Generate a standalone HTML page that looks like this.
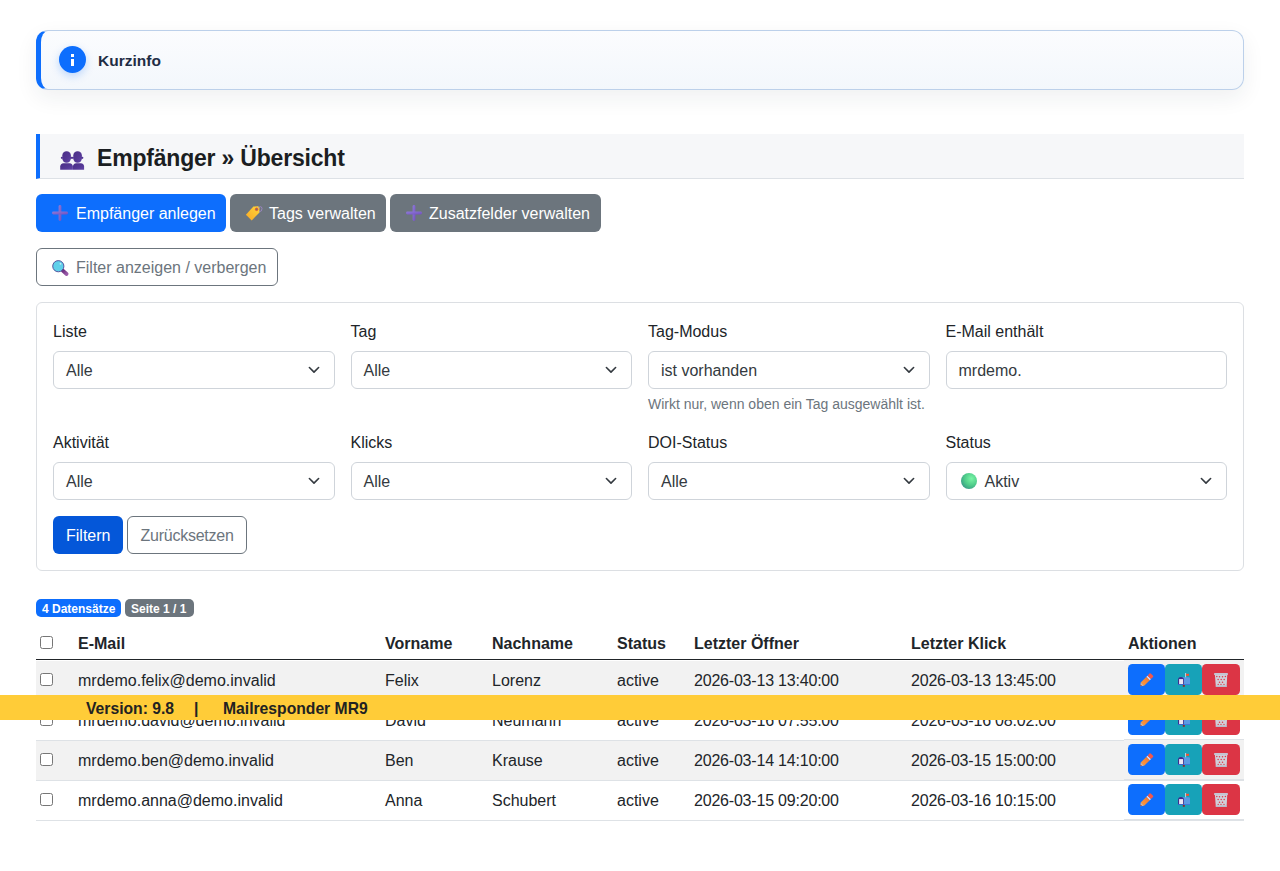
<!DOCTYPE html>
<html lang="de">
<head>
<meta charset="utf-8">
<title>Empfänger</title>
<style>
*{box-sizing:border-box;}
html,body{margin:0;padding:0;background:#fff;}
body{font-family:"Liberation Sans",sans-serif;font-size:16px;line-height:1.5;color:#212529;width:1280px;height:871px;overflow:hidden;position:relative;}
.abs{position:absolute;}
svg{display:block;}
/* info box */
.info{left:36px;top:30px;width:1208px;height:60px;border:1px solid #bcd0ea;border-left:5px solid #0d6efd;border-radius:12px;background:linear-gradient(180deg,#fbfcfe 0%,#f3f7fc 100%);box-shadow:0 8px 22px rgba(30,40,60,.07);}
.info .ic{position:absolute;left:18px;top:15px;width:27px;height:27px;border-radius:50%;background:#0d6efd;box-shadow:0 3px 8px rgba(13,110,253,.25);}
.info .ic b{position:absolute;left:11.8px;top:8px;width:3.4px;height:12px;}
.info .ic b:before{content:"";position:absolute;left:0;top:0;width:3.4px;height:3.3px;background:#fff;}
.info .ic b:after{content:"";position:absolute;left:0;top:4.7px;width:3.4px;height:7.1px;background:#fff;}
.info .t{position:absolute;left:57px;top:19.5px;font-size:15.5px;font-weight:bold;line-height:20px;color:#1f2d45;}
/* header */
.hdr{left:36px;top:134px;width:1208px;height:45px;background:#f6f7f9;border-left:4px solid #0d6efd;border-bottom:1px solid #dde1e6;}
.hdr .t{position:absolute;left:57px;top:10px;font-size:23px;letter-spacing:-0.2px;font-weight:bold;line-height:28px;color:#1b1e22;white-space:nowrap;}
.hdr .ico{position:absolute;}
/* buttons */
.btn{position:absolute;height:38px;border-radius:6px;color:#fff;font-size:16px;line-height:38px;white-space:nowrap;}
.btn .tx{position:absolute;top:1px;}
.bp{background:#0d6efd;}
.bs{background:#6c757d;}
.bo{background:#fff;border:1px solid #6c757d;color:#6c757d;line-height:36px;}

/* card */
.card{left:36px;top:302px;width:1208px;height:269px;border:1px solid #dcdfe3;border-radius:6px;}
.lbl{position:absolute;font-size:16px;line-height:24px;color:#212529;white-space:nowrap;}
.sel{position:absolute;width:281.5px;height:38px;border:1px solid #cfd4da;border-radius:6px;background:#fff;font-size:16px;line-height:36px;color:#343a40;}
.sel .v{position:absolute;left:12px;top:1px;white-space:nowrap;}
.sel svg{position:absolute;right:12px;top:12px;}
.help{position:absolute;font-size:14px;line-height:21px;color:#6c757d;white-space:nowrap;}
/* badges */
.badge{position:absolute;top:599px;height:18px;border-radius:5px;color:#fff;font-size:12px;font-weight:bold;line-height:18px;white-space:nowrap;}
/* table */
.th{position:absolute;top:632px;font-weight:bold;font-size:16px;line-height:24px;color:#212529;white-space:nowrap;}
.td{position:absolute;font-size:16px;line-height:24px;color:#212529;white-space:nowrap;}
.row{position:absolute;left:36px;width:1208px;height:40px;border-bottom:1px solid #dee2e6;}
.row.g{background:#f2f2f2;}
.cb{position:absolute;left:40px;width:13px;height:13px;border:1px solid #767676;border-radius:2.5px;background:#fff;}
.ab{position:absolute;height:31px;width:37px;border-radius:4.5px;}
.ab svg{position:absolute;left:0;top:0;}
.banner{left:0;top:695px;width:1280px;height:25px;background:#ffcc38;}
.banner span{position:absolute;top:3.5px;font-size:15.7px;font-weight:bold;line-height:20px;color:#222;white-space:nowrap;}
</style>
</head>
<body>

<div class="abs info">
  <div class="ic"><b></b></div>
  <div class="t">Kurzinfo</div>
</div>

<div class="abs hdr">
  <div class="ico" style="left:15px;top:11px">
    <svg width="35" height="30" viewBox="0 0 35 30">
      <defs><linearGradient id="pg" x1="0" y1="0" x2="1" y2="1"><stop offset="0" stop-color="#4a2e86"/><stop offset="0.6" stop-color="#553896"/><stop offset="1" stop-color="#6446a8"/></linearGradient></defs>
      <g fill="url(#pg)">
      <rect x="7.3" y="6.2" width="8.6" height="11.6" rx="4.2"/>
      <circle cx="6.9" cy="12.8" r="1.1"/><circle cx="16.3" cy="12.8" r="1.1"/>
      <path d="M5.2 24.8 L5.2 21.5 Q5.4 18.6 8.6 18.2 L14.5 18.2 Q17.7 18.6 17.9 21.5 L17.9 24.8 Z"/>
      <rect x="18.3" y="6.2" width="8.6" height="11.6" rx="4.2"/>
      <circle cx="17.9" cy="12.8" r="1.1"/><circle cx="27.3" cy="12.8" r="1.1"/>
      <path d="M17.9 24.8 L17.9 21.5 Q18.1 18.6 21.3 18.2 L25.8 18.2 Q29 18.6 29.1 21.5 L29.1 24.8 Z"/>
      </g>
    </svg>
  </div>
  <div class="t">Empfänger » Übersicht</div>
</div>

<div class="btn bp" style="left:36px;top:194px;width:190px;">
  <svg class="abs" style="left:16px;top:11px" width="16" height="16" viewBox="0 0 16 16"><defs><linearGradient id="pl1" x1="0" y1="0" x2="1" y2="1"><stop offset="0" stop-color="#8d7ad8"/><stop offset="1" stop-color="#7450c0"/></linearGradient></defs><rect x="6.6" y="0" width="2.8" height="16" rx="1.4" fill="url(#pl1)"/><rect x="0" y="6.6" width="16" height="2.8" rx="1.4" fill="url(#pl1)"/></svg>
  <span class="tx" style="left:40px">Empfänger anlegen</span>
</div>
<div class="btn bs" style="left:230px;top:194px;width:156px;">
  <svg class="abs" style="left:10px;top:4px" width="26" height="26" viewBox="0 0 26 26"><defs><linearGradient id="tg" x1="0" y1="1" x2="1" y2="0"><stop offset="0" stop-color="#f9a825"/><stop offset="1" stop-color="#ffd63a"/></linearGradient></defs><path d="M5.9 16.8 L11.7 22.4 L19.5 14.6 L19.4 9.6 L18.2 8.3 L13.4 8.6 Z" fill="url(#tg)"/><path d="M16.6 11.3 Q21.5 6.5 22 10.5 Q22.3 13.6 19 13.8" fill="none" stroke="#a48ad0" stroke-width="0.8"/><circle cx="16.6" cy="11.3" r="1.3" fill="#6c757d" stroke="#ec5a2a" stroke-width="1"/></svg>
  <span class="tx" style="left:39px">Tags verwalten</span>
</div>
<div class="btn bs" style="left:390px;top:194px;width:211px;">
  <svg class="abs" style="left:16px;top:11px" width="16" height="16" viewBox="0 0 16 16"><defs><linearGradient id="pl2" x1="0" y1="0" x2="1" y2="1"><stop offset="0" stop-color="#8d7ad8"/><stop offset="1" stop-color="#7450c0"/></linearGradient></defs><rect x="6.6" y="0" width="2.8" height="16" rx="1.4" fill="url(#pl2)"/><rect x="0" y="6.6" width="16" height="2.8" rx="1.4" fill="url(#pl2)"/></svg>
  <span class="tx" style="left:39px">Zusatzfelder verwalten</span>
</div>

<div class="btn bo" style="left:36px;top:248px;width:242px;">
  <svg class="abs" style="left:14.5px;top:10.5px" width="18" height="18" viewBox="0 0 18 18"><defs><linearGradient id="hg" x1="0" y1="0" x2="1" y2="1"><stop offset="0" stop-color="#6a2f7e"/><stop offset="1" stop-color="#9a5aa8"/></linearGradient></defs><path d="M10.8 10.6 L14.6 14" stroke="url(#hg)" stroke-width="3.8" stroke-linecap="round"/><circle cx="6.3" cy="6.2" r="5.6" fill="#5fd0ea" stroke="#4e4594" stroke-width="0.9"/><circle cx="8.5" cy="3.8" r="0.9" fill="#cfe9f5"/></svg>
  <span class="tx" style="left:39px">Filter anzeigen / verbergen</span>
</div>

<div class="abs card"></div>
<div class="lbl" style="left:53px;top:320px">Liste</div>
<div class="sel" style="left:53px;top:351px"><span class="v">Alle</span><svg width="16" height="12" viewBox="0 0 16 12"><path d="M3.4 3.5 L8 8.1 L12.6 3.5" fill="none" stroke="#343a40" stroke-width="1.6" stroke-linecap="round" stroke-linejoin="round"/></svg></div>
<div class="lbl" style="left:350.5px;top:320px">Tag</div>
<div class="sel" style="left:350.5px;top:351px"><span class="v">Alle</span><svg width="16" height="12" viewBox="0 0 16 12"><path d="M3.4 3.5 L8 8.1 L12.6 3.5" fill="none" stroke="#343a40" stroke-width="1.6" stroke-linecap="round" stroke-linejoin="round"/></svg></div>
<div class="lbl" style="left:648px;top:320px">Tag-Modus</div>
<div class="sel" style="left:648px;top:351px"><span class="v">ist vorhanden</span><svg width="16" height="12" viewBox="0 0 16 12"><path d="M3.4 3.5 L8 8.1 L12.6 3.5" fill="none" stroke="#343a40" stroke-width="1.6" stroke-linecap="round" stroke-linejoin="round"/></svg></div>
<div class="lbl" style="left:945.5px;top:320px">E-Mail enthält</div>
<div class="sel" style="left:945.5px;top:351px"><span class="v">mrdemo.</span></div>
<div class="help" style="left:648px;top:394px">Wirkt nur, wenn oben ein Tag ausgewählt ist.</div>
<div class="lbl" style="left:53px;top:431px">Aktivität</div>
<div class="sel" style="left:53px;top:462px"><span class="v">Alle</span><svg width="16" height="12" viewBox="0 0 16 12"><path d="M3.4 3.5 L8 8.1 L12.6 3.5" fill="none" stroke="#343a40" stroke-width="1.6" stroke-linecap="round" stroke-linejoin="round"/></svg></div>
<div class="lbl" style="left:350.5px;top:431px">Klicks</div>
<div class="sel" style="left:350.5px;top:462px"><span class="v">Alle</span><svg width="16" height="12" viewBox="0 0 16 12"><path d="M3.4 3.5 L8 8.1 L12.6 3.5" fill="none" stroke="#343a40" stroke-width="1.6" stroke-linecap="round" stroke-linejoin="round"/></svg></div>
<div class="lbl" style="left:648px;top:431px">DOI-Status</div>
<div class="sel" style="left:648px;top:462px"><span class="v">Alle</span><svg width="16" height="12" viewBox="0 0 16 12"><path d="M3.4 3.5 L8 8.1 L12.6 3.5" fill="none" stroke="#343a40" stroke-width="1.6" stroke-linecap="round" stroke-linejoin="round"/></svg></div>
<div class="lbl" style="left:945.5px;top:431px">Status</div>
<div class="sel" style="left:945.5px;top:462px"><svg style="position:absolute;left:14px;top:10px" width="16" height="16" viewBox="0 0 16 16"><defs><radialGradient id="gg" cx="0.65" cy="0.35" r="0.7"><stop offset="0" stop-color="#7af5a6"/><stop offset="0.6" stop-color="#4fcc8a"/><stop offset="1" stop-color="#3a9f86"/></radialGradient></defs><circle cx="8" cy="8" r="8" fill="url(#gg)"/></svg><span class="v" style="left:38px">Aktiv</span><svg width="16" height="12" viewBox="0 0 16 12"><path d="M3.4 3.5 L8 8.1 L12.6 3.5" fill="none" stroke="#343a40" stroke-width="1.6" stroke-linecap="round" stroke-linejoin="round"/></svg></div>
<div class="btn" style="left:53px;top:516px;width:70px;background:#0457d9;"><span class="tx" style="left:13px">Filtern</span></div>
<div class="btn bo" style="left:127px;top:516px;width:120px;"><span class="tx" style="left:12.5px;letter-spacing:-0.25px">Zurücksetzen</span></div>
<div class="badge" style="left:36px;width:85px;background:#0d6efd;"><span style="position:absolute;left:6px;top:0.7px">4 Datensätze</span></div>
<div class="badge" style="left:125px;width:69px;background:#6c757d;"><span style="position:absolute;left:6px;top:0.7px">Seite 1 / 1</span></div>
<div class="cb" style="top:636px"></div>
<div class="th" style="left:78px">E-Mail</div>
<div class="th" style="left:385px">Vorname</div>
<div class="th" style="left:492px">Nachname</div>
<div class="th" style="left:617px">Status</div>
<div class="th" style="left:694px">Letzter Öffner</div>
<div class="th" style="left:911px">Letzter Klick</div>
<div class="th" style="left:1128px">Aktionen</div>
<div class="abs" style="left:36px;top:659px;width:1208px;height:1px;background:#212529"></div>
<div class="row g" style="top:661px"></div>
<div class="row g" style="top:660px;left:1124px;width:120px"></div>
<div class="cb" style="top:673px"></div>
<div class="td" style="left:78px;top:669px">mrdemo.felix@demo.invalid</div>
<div class="td" style="left:385px;top:669px">Felix</div>
<div class="td" style="left:492px;top:669px">Lorenz</div>
<div class="td" style="left:617px;top:669px">active</div>
<div class="td" style="left:694px;top:669px;letter-spacing:-0.2px">2026-03-13 13:40:00</div>
<div class="td" style="left:911px;top:669px;letter-spacing:-0.2px">2026-03-13 13:45:00</div>
<div class="ab" style="left:1128px;top:664px;background:#0d6efd"><svg width="37" height="31" viewBox="0 0 37 31"><defs><linearGradient id="pb" x1="0" y1="1" x2="1" y2="0"><stop offset="0" stop-color="#ffa040"/><stop offset="1" stop-color="#ef7330"/></linearGradient></defs><path d="M12.76 18.39 L16.12 21.81 L21.83 16.21 L18.47 12.79 Z" fill="url(#pb)"/><path d="M12.3 22.2 L12.76 18.39 L16.12 21.81 Z" fill="#e9b58c"/><path d="M12.3 22.2 L12.6 20.6 L14 21.9 Z" fill="#7a3a4a"/><path d="M18.47 12.79 L21.83 16.21 L22.98 15.09 L19.62 11.67 Z" fill="#e4dff0"/><path d="M19.62 11.67 L22.98 15.09 L25.08 13.01 Q25.6 12.3 24.9 11.6 L22.7 9.5 Q22 9 21.4 9.6 Z" fill="#f4574a"/></svg></div>
<div class="ab" style="left:1165px;top:664px;background:#17a2b8"><svg width="37" height="31" viewBox="0 0 37 31"><rect x="17.8" y="20.8" width="2" height="2" fill="#8a2a2a"/><rect x="20.2" y="9" width="0.9" height="6" fill="#d8dce6"/><rect x="21" y="9.8" width="3" height="2" fill="#f4512f"/><path d="M17 13.3 H23.8 Q25 13.3 25 14.5 V20.9 H17 Z" fill="#5a9ae4"/><path d="M13 16 Q13 12.9 16 12.9 Q19 12.9 19 16 V20.9 H13 Z" fill="#3b2f8e"/><rect x="14.1" y="15.1" width="4" height="5" fill="#ece8f4"/><rect x="13" y="20.1" width="12" height="0.8" fill="#3a6fd8"/></svg></div>
<div class="ab" style="width:38px;left:1202px;top:664px;background:#dc3545"><svg width="38" height="31" viewBox="0 0 38 31"><path d="M12.9 10.6 H25.3 L24.6 22.4 H13.8 Z" fill="#cfd0da"/><g fill="#e03a48"><circle cx="14.8" cy="12.6" r="0.75"/><circle cx="17.5" cy="12.8" r="0.75"/><circle cx="20.5" cy="12.8" r="0.75"/><circle cx="23.4" cy="12.6" r="0.75"/><circle cx="16.1" cy="15.4" r="0.75"/><circle cx="19.2" cy="15.4" r="0.75"/><circle cx="22.2" cy="15.4" r="0.75"/><circle cx="17.5" cy="18.2" r="0.75"/><circle cx="20.5" cy="18.2" r="0.75"/><circle cx="16.2" cy="20.4" r="0.65"/><circle cx="19" cy="20.4" r="0.65"/><circle cx="22" cy="20.4" r="0.65"/></g><rect x="12.1" y="9" width="13.8" height="1.9" rx="0.5" fill="#c4c6d2"/><rect x="13.7" y="21.4" width="11.2" height="1.5" rx="0.4" fill="#b8bccb"/></svg></div>
<div class="row" style="top:701px"></div>
<div class="row" style="top:700px;left:1124px;width:120px"></div>
<div class="cb" style="top:713px"></div>
<div class="td" style="left:78px;top:709px">mrdemo.david@demo.invalid</div>
<div class="td" style="left:385px;top:709px">David</div>
<div class="td" style="left:492px;top:709px">Neumann</div>
<div class="td" style="left:617px;top:709px">active</div>
<div class="td" style="left:694px;top:709px;letter-spacing:-0.2px">2026-03-16 07:55:00</div>
<div class="td" style="left:911px;top:709px;letter-spacing:-0.2px">2026-03-16 08:02:00</div>
<div class="ab" style="left:1128px;top:704px;background:#0d6efd"><svg width="37" height="31" viewBox="0 0 37 31"><defs><linearGradient id="pb" x1="0" y1="1" x2="1" y2="0"><stop offset="0" stop-color="#ffa040"/><stop offset="1" stop-color="#ef7330"/></linearGradient></defs><path d="M12.76 18.39 L16.12 21.81 L21.83 16.21 L18.47 12.79 Z" fill="url(#pb)"/><path d="M12.3 22.2 L12.76 18.39 L16.12 21.81 Z" fill="#e9b58c"/><path d="M12.3 22.2 L12.6 20.6 L14 21.9 Z" fill="#7a3a4a"/><path d="M18.47 12.79 L21.83 16.21 L22.98 15.09 L19.62 11.67 Z" fill="#e4dff0"/><path d="M19.62 11.67 L22.98 15.09 L25.08 13.01 Q25.6 12.3 24.9 11.6 L22.7 9.5 Q22 9 21.4 9.6 Z" fill="#f4574a"/></svg></div>
<div class="ab" style="left:1165px;top:704px;background:#17a2b8"><svg width="37" height="31" viewBox="0 0 37 31"><rect x="17.8" y="20.8" width="2" height="2" fill="#8a2a2a"/><rect x="20.2" y="9" width="0.9" height="6" fill="#d8dce6"/><rect x="21" y="9.8" width="3" height="2" fill="#f4512f"/><path d="M17 13.3 H23.8 Q25 13.3 25 14.5 V20.9 H17 Z" fill="#5a9ae4"/><path d="M13 16 Q13 12.9 16 12.9 Q19 12.9 19 16 V20.9 H13 Z" fill="#3b2f8e"/><rect x="14.1" y="15.1" width="4" height="5" fill="#ece8f4"/><rect x="13" y="20.1" width="12" height="0.8" fill="#3a6fd8"/></svg></div>
<div class="ab" style="width:38px;left:1202px;top:704px;background:#dc3545"><svg width="38" height="31" viewBox="0 0 38 31"><path d="M12.9 10.6 H25.3 L24.6 22.4 H13.8 Z" fill="#cfd0da"/><g fill="#e03a48"><circle cx="14.8" cy="12.6" r="0.75"/><circle cx="17.5" cy="12.8" r="0.75"/><circle cx="20.5" cy="12.8" r="0.75"/><circle cx="23.4" cy="12.6" r="0.75"/><circle cx="16.1" cy="15.4" r="0.75"/><circle cx="19.2" cy="15.4" r="0.75"/><circle cx="22.2" cy="15.4" r="0.75"/><circle cx="17.5" cy="18.2" r="0.75"/><circle cx="20.5" cy="18.2" r="0.75"/><circle cx="16.2" cy="20.4" r="0.65"/><circle cx="19" cy="20.4" r="0.65"/><circle cx="22" cy="20.4" r="0.65"/></g><rect x="12.1" y="9" width="13.8" height="1.9" rx="0.5" fill="#c4c6d2"/><rect x="13.7" y="21.4" width="11.2" height="1.5" rx="0.4" fill="#b8bccb"/></svg></div>
<div class="row g" style="top:741px"></div>
<div class="row g" style="top:740px;left:1124px;width:120px"></div>
<div class="cb" style="top:753px"></div>
<div class="td" style="left:78px;top:749px">mrdemo.ben@demo.invalid</div>
<div class="td" style="left:385px;top:749px">Ben</div>
<div class="td" style="left:492px;top:749px">Krause</div>
<div class="td" style="left:617px;top:749px">active</div>
<div class="td" style="left:694px;top:749px;letter-spacing:-0.2px">2026-03-14 14:10:00</div>
<div class="td" style="left:911px;top:749px;letter-spacing:-0.2px">2026-03-15 15:00:00</div>
<div class="ab" style="left:1128px;top:744px;background:#0d6efd"><svg width="37" height="31" viewBox="0 0 37 31"><defs><linearGradient id="pb" x1="0" y1="1" x2="1" y2="0"><stop offset="0" stop-color="#ffa040"/><stop offset="1" stop-color="#ef7330"/></linearGradient></defs><path d="M12.76 18.39 L16.12 21.81 L21.83 16.21 L18.47 12.79 Z" fill="url(#pb)"/><path d="M12.3 22.2 L12.76 18.39 L16.12 21.81 Z" fill="#e9b58c"/><path d="M12.3 22.2 L12.6 20.6 L14 21.9 Z" fill="#7a3a4a"/><path d="M18.47 12.79 L21.83 16.21 L22.98 15.09 L19.62 11.67 Z" fill="#e4dff0"/><path d="M19.62 11.67 L22.98 15.09 L25.08 13.01 Q25.6 12.3 24.9 11.6 L22.7 9.5 Q22 9 21.4 9.6 Z" fill="#f4574a"/></svg></div>
<div class="ab" style="left:1165px;top:744px;background:#17a2b8"><svg width="37" height="31" viewBox="0 0 37 31"><rect x="17.8" y="20.8" width="2" height="2" fill="#8a2a2a"/><rect x="20.2" y="9" width="0.9" height="6" fill="#d8dce6"/><rect x="21" y="9.8" width="3" height="2" fill="#f4512f"/><path d="M17 13.3 H23.8 Q25 13.3 25 14.5 V20.9 H17 Z" fill="#5a9ae4"/><path d="M13 16 Q13 12.9 16 12.9 Q19 12.9 19 16 V20.9 H13 Z" fill="#3b2f8e"/><rect x="14.1" y="15.1" width="4" height="5" fill="#ece8f4"/><rect x="13" y="20.1" width="12" height="0.8" fill="#3a6fd8"/></svg></div>
<div class="ab" style="width:38px;left:1202px;top:744px;background:#dc3545"><svg width="38" height="31" viewBox="0 0 38 31"><path d="M12.9 10.6 H25.3 L24.6 22.4 H13.8 Z" fill="#cfd0da"/><g fill="#e03a48"><circle cx="14.8" cy="12.6" r="0.75"/><circle cx="17.5" cy="12.8" r="0.75"/><circle cx="20.5" cy="12.8" r="0.75"/><circle cx="23.4" cy="12.6" r="0.75"/><circle cx="16.1" cy="15.4" r="0.75"/><circle cx="19.2" cy="15.4" r="0.75"/><circle cx="22.2" cy="15.4" r="0.75"/><circle cx="17.5" cy="18.2" r="0.75"/><circle cx="20.5" cy="18.2" r="0.75"/><circle cx="16.2" cy="20.4" r="0.65"/><circle cx="19" cy="20.4" r="0.65"/><circle cx="22" cy="20.4" r="0.65"/></g><rect x="12.1" y="9" width="13.8" height="1.9" rx="0.5" fill="#c4c6d2"/><rect x="13.7" y="21.4" width="11.2" height="1.5" rx="0.4" fill="#b8bccb"/></svg></div>
<div class="row" style="top:781px"></div>
<div class="row" style="top:780px;left:1124px;width:120px"></div>
<div class="cb" style="top:793px"></div>
<div class="td" style="left:78px;top:789px">mrdemo.anna@demo.invalid</div>
<div class="td" style="left:385px;top:789px">Anna</div>
<div class="td" style="left:492px;top:789px">Schubert</div>
<div class="td" style="left:617px;top:789px">active</div>
<div class="td" style="left:694px;top:789px;letter-spacing:-0.2px">2026-03-15 09:20:00</div>
<div class="td" style="left:911px;top:789px;letter-spacing:-0.2px">2026-03-16 10:15:00</div>
<div class="ab" style="left:1128px;top:784px;background:#0d6efd"><svg width="37" height="31" viewBox="0 0 37 31"><defs><linearGradient id="pb" x1="0" y1="1" x2="1" y2="0"><stop offset="0" stop-color="#ffa040"/><stop offset="1" stop-color="#ef7330"/></linearGradient></defs><path d="M12.76 18.39 L16.12 21.81 L21.83 16.21 L18.47 12.79 Z" fill="url(#pb)"/><path d="M12.3 22.2 L12.76 18.39 L16.12 21.81 Z" fill="#e9b58c"/><path d="M12.3 22.2 L12.6 20.6 L14 21.9 Z" fill="#7a3a4a"/><path d="M18.47 12.79 L21.83 16.21 L22.98 15.09 L19.62 11.67 Z" fill="#e4dff0"/><path d="M19.62 11.67 L22.98 15.09 L25.08 13.01 Q25.6 12.3 24.9 11.6 L22.7 9.5 Q22 9 21.4 9.6 Z" fill="#f4574a"/></svg></div>
<div class="ab" style="left:1165px;top:784px;background:#17a2b8"><svg width="37" height="31" viewBox="0 0 37 31"><rect x="17.8" y="20.8" width="2" height="2" fill="#8a2a2a"/><rect x="20.2" y="9" width="0.9" height="6" fill="#d8dce6"/><rect x="21" y="9.8" width="3" height="2" fill="#f4512f"/><path d="M17 13.3 H23.8 Q25 13.3 25 14.5 V20.9 H17 Z" fill="#5a9ae4"/><path d="M13 16 Q13 12.9 16 12.9 Q19 12.9 19 16 V20.9 H13 Z" fill="#3b2f8e"/><rect x="14.1" y="15.1" width="4" height="5" fill="#ece8f4"/><rect x="13" y="20.1" width="12" height="0.8" fill="#3a6fd8"/></svg></div>
<div class="ab" style="width:38px;left:1202px;top:784px;background:#dc3545"><svg width="38" height="31" viewBox="0 0 38 31"><path d="M12.9 10.6 H25.3 L24.6 22.4 H13.8 Z" fill="#cfd0da"/><g fill="#e03a48"><circle cx="14.8" cy="12.6" r="0.75"/><circle cx="17.5" cy="12.8" r="0.75"/><circle cx="20.5" cy="12.8" r="0.75"/><circle cx="23.4" cy="12.6" r="0.75"/><circle cx="16.1" cy="15.4" r="0.75"/><circle cx="19.2" cy="15.4" r="0.75"/><circle cx="22.2" cy="15.4" r="0.75"/><circle cx="17.5" cy="18.2" r="0.75"/><circle cx="20.5" cy="18.2" r="0.75"/><circle cx="16.2" cy="20.4" r="0.65"/><circle cx="19" cy="20.4" r="0.65"/><circle cx="22" cy="20.4" r="0.65"/></g><rect x="12.1" y="9" width="13.8" height="1.9" rx="0.5" fill="#c4c6d2"/><rect x="13.7" y="21.4" width="11.2" height="1.5" rx="0.4" fill="#b8bccb"/></svg></div>
<div class="abs banner"><span style="left:86px">Version: 9.8</span><span style="left:194px">|</span><span style="left:223px">Mailresponder MR9</span></div>

</body>
</html>
